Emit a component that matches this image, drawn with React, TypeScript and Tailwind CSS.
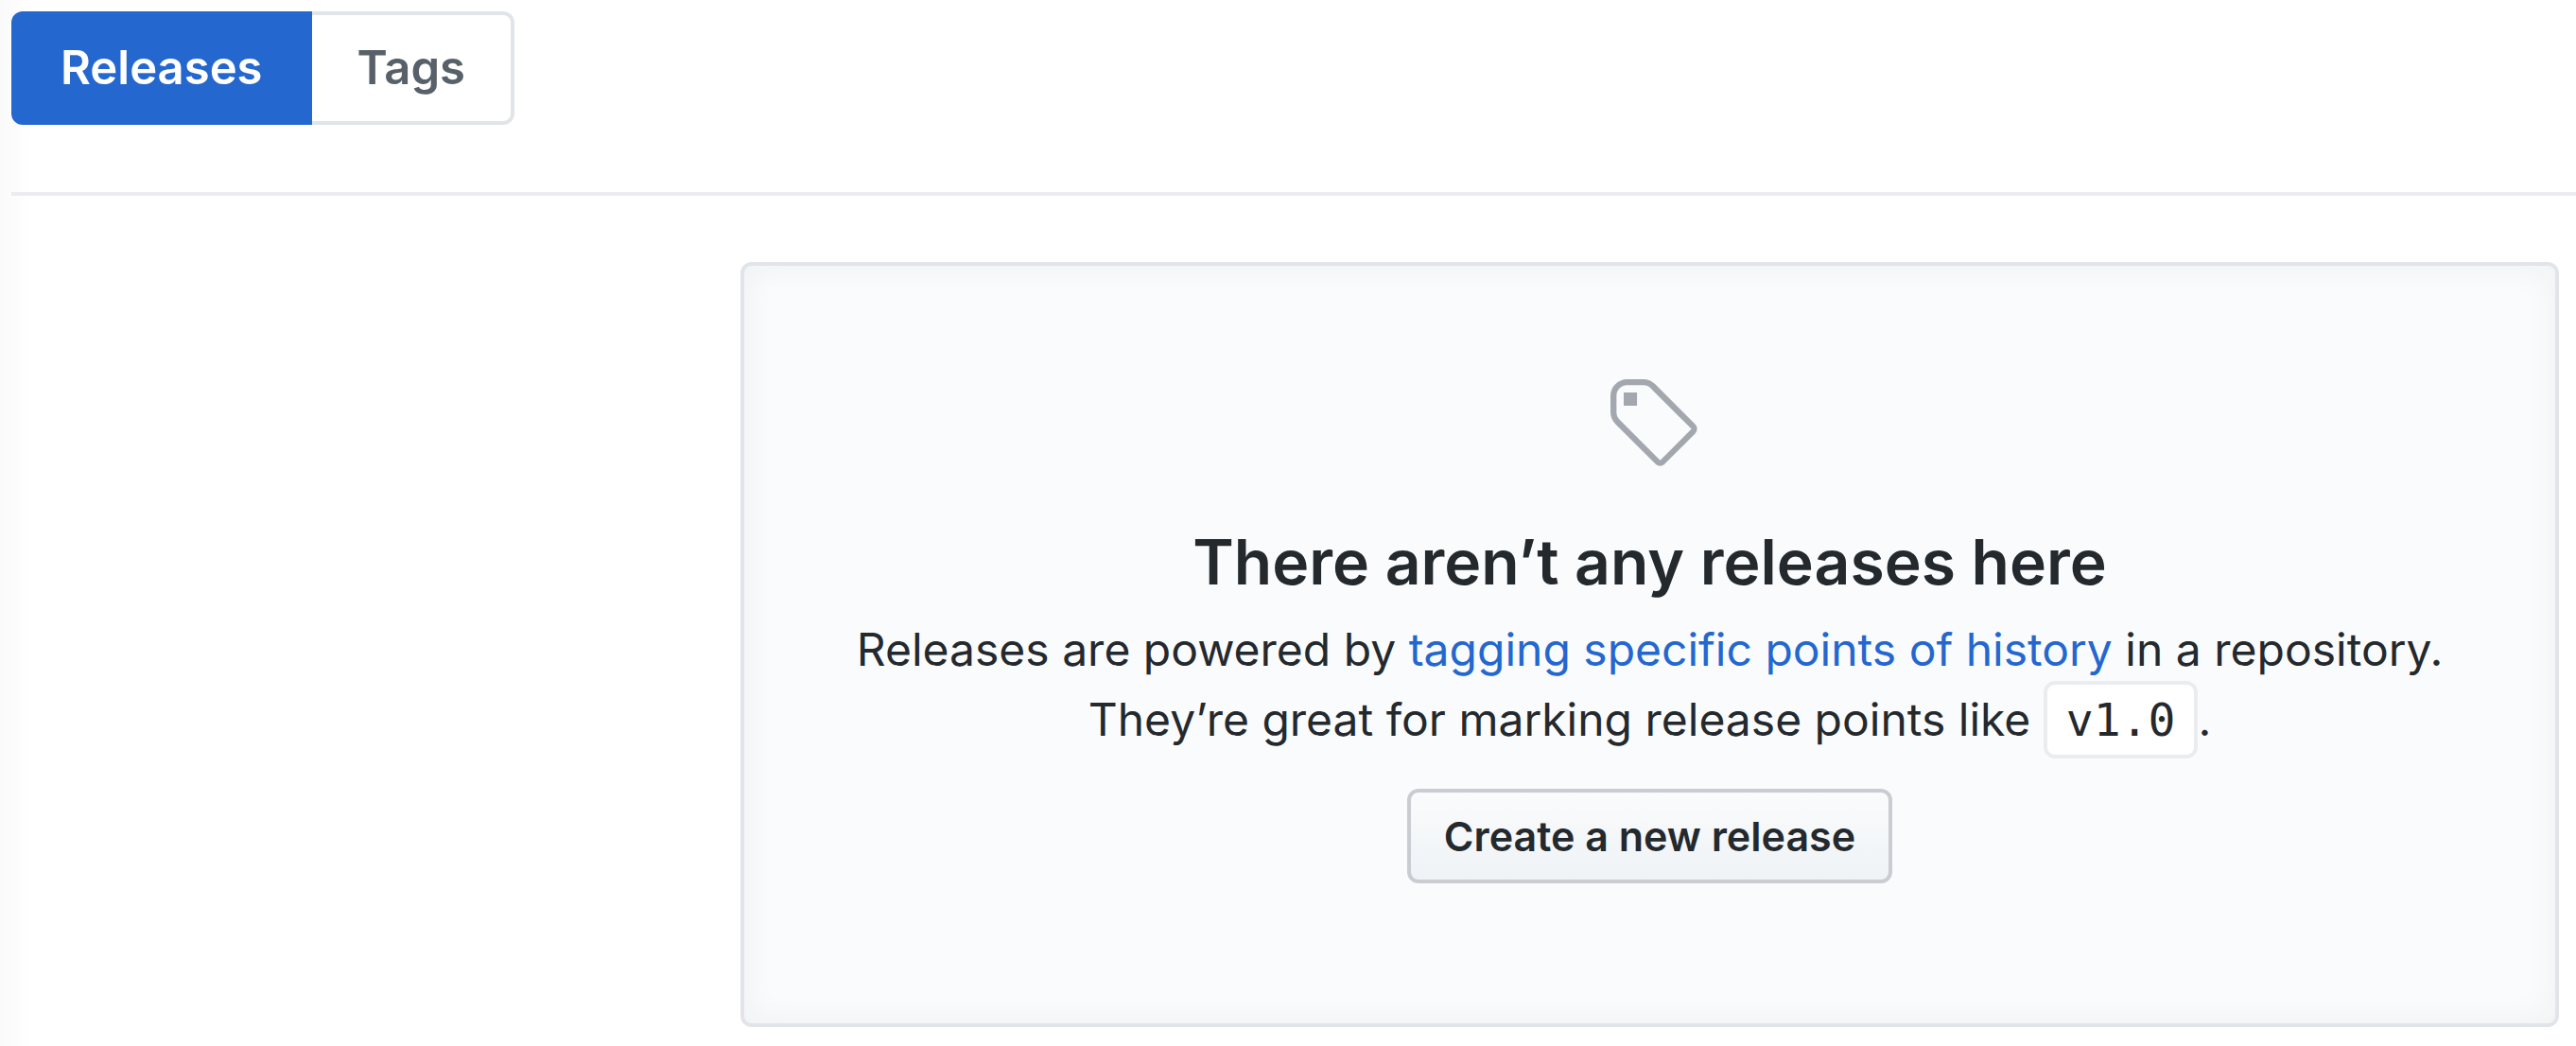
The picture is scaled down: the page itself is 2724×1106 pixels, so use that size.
function TagIcon() {
  return (
    <svg aria-hidden="true" viewBox="0 0 14 16" className="mt-px h-28 w-[98px] overflow-visible fill-[#a3a8af]">
      <path
        fillRule="evenodd"
        d="M7.73 1.73C7.26 1.26 6.62 1 5.96 1H3.5C2.13 1 1 2.13 1 3.5v2.47c0 .66.27 1.3.73 1.77l6.06 6.06c.39.39 1.02.39 1.41 0l4.59-4.59a.996.996 0 0 0 0-1.41L7.73 1.73zM2.38 7.09c-.31-.3-.47-.7-.47-1.13V3.5c0-.88.72-1.59 1.59-1.59h2.47c.42 0 .83.16 1.13.47l6.14 6.13-4.73 4.73-6.13-6.15zM3.01 3h2v2H3V3h.01z"
      />
    </svg>
  );
}

function Tabs() {
  return (
    <nav aria-label="Releases and tags" className="flex text-[49px] leading-[72px] font-semibold">
      <a href="#releases" aria-current="page" className="rounded-l-xl bg-[#2467cf] px-[52px] py-6 text-white">
        Releases
      </a>
      <a href="#tags" className="rounded-r-xl border-4 border-l-0 border-[#e1e4e8] px-12 py-5 text-[#586069]">
        Tags
      </a>
    </nav>
  );
}

function BlankSlate() {
  return (
    <section className="flex flex-1 flex-col items-center rounded-xl border-4 border-[#e1e4e8] bg-[#fafbfd] px-24 py-28 text-center shadow-[inset_0_0_35px_rgba(27,31,35,0.05)]">
      <TagIcon />
      <h3 className="mt-10 mb-2 text-[66px] leading-[96px] font-semibold">There aren’t any releases here</h3>
      <p className="text-[48px] leading-[74px]">
        Releases are powered by{" "}
        <a href="#tagging" className="text-[#2467cf]">
          tagging specific points of history
        </a>{" "}
        in a repository.
        <br />
        They’re great for marking release points like{" "}
        <code className="rounded-xl border-4 border-[#eaecef] bg-white px-5 py-[9px] font-['DejaVu_Sans_Mono',monospace] text-[48px] leading-none">
          v1.0
        </code>
        .
      </p>
      <button
        type="button"
        className="my-9 rounded-xl border-4 border-[#c9ccd1] bg-linear-to-b from-[#fafbfc] to-[#eff3f6] px-[35px] py-4 text-[43px] leading-[60px] font-semibold"
      >
        Create a new release
      </button>
    </section>
  );
}

export default function App() {
  return (
    <main className="min-h-screen bg-linear-to-r from-[#fafafa] to-white to-[36px] pt-3 pl-3 font-['Inter',sans-serif] text-[#24292e]">
      <Tabs />
      <hr className="mt-[71px] border-t-4 border-[#eaecef]" />
      <div className="mt-[70px] mr-[18px] ml-[771px] flex">
        <BlankSlate />
      </div>
    </main>
  );
}
